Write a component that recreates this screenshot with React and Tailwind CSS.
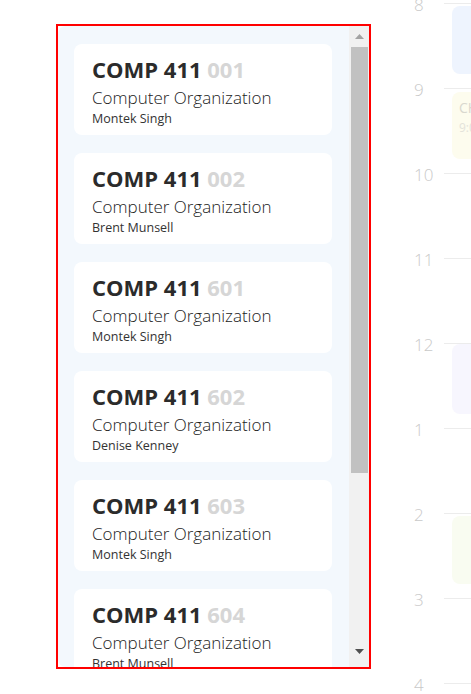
import React from "react";

const sections = [
  { num: "001", prof: "Montek Singh" },
  { num: "002", prof: "Brent Munsell" },
  { num: "601", prof: "Montek Singh" },
  { num: "602", prof: "Denise Kenney" },
  { num: "603", prof: "Montek Singh" },
  { num: "604", prof: "Brent Munsell" },
];

const hours = [
  { h: "8", ev: { cls: "mt-[2px] h-[68px] bg-[#eef4fe]" } },
  { h: "9", ev: { cls: "mt-[3px] h-[67px] bg-[#fdfcee]", title: "CHEM 101", time: "9:00 AM" } },
  { h: "10" },
  { h: "11" },
  { h: "12", ev: { cls: "mt-0 h-[70px] bg-[#f7f6fe]" } },
  { h: "1" },
  { h: "2", ev: { cls: "mt-[2px] h-[68px] bg-[#f9fcf1]" } },
  { h: "3" },
  { h: "4" },
];

function Card({ num, prof }) {
  return (
    <div className="w-[258px] h-[91px] shrink-0 rounded-lg bg-white pl-[18px] pr-3 pt-[10px] overflow-hidden">
      <div className="text-[22px] leading-[30px] font-bold text-[#2b2b2b] whitespace-nowrap">
        COMP 411 <span className="text-[#d6d6d6]">{num}</span>
      </div>
      <div className="text-[17px] leading-[28px] font-light text-[#222] whitespace-nowrap">
        Computer Organization
      </div>
      <div className="text-[12.5px] leading-[13px] text-[#333] whitespace-nowrap">{prof}</div>
    </div>
  );
}

export default function App() {
  return (
    <div
      className="relative w-[471px] h-[694px] overflow-hidden bg-white"
      style={{ fontFamily: '"Open Sans", "Noto Sans", sans-serif' }}
    >
      {/* background calendar */}
      <div className="flex flex-col pl-[414px] pt-[3px]">
        {hours.map(({ h, ev }) => (
          <div key={h} className="flex h-[85px] shrink-0">
            <div className="w-[30px] shrink-0 -mt-[10px] text-[17px] leading-[24px] font-light text-[#c9c9c9]">
              {h}
            </div>
            <div className="flex-1 min-w-0 border-t border-[#ececec] pl-[8px]">
              {ev && (
                <div className={`rounded-l-lg ${ev.cls} pl-[7px] pt-[6px] overflow-hidden whitespace-nowrap`}>
                  {ev.title && (
                    <>
                      <div className="text-[14px] leading-[20px] text-[#d9d8cf]">{ev.title}</div>
                      <div className="text-[12px] leading-[20px] text-[#e4e3da]">{ev.time}</div>
                    </>
                  )}
                </div>
              )}
            </div>
          </div>
        ))}
      </div>

      {/* course section panel */}
      <div className="absolute left-[56px] top-[24px] w-[315px] h-[645px] border-2 border-[#ff0000] bg-white flex">
        <div className="w-[291px] h-full rounded-l-lg bg-[#f3f8fd] overflow-hidden flex flex-col gap-[18px] pl-[16px] pt-[18px]">
          {sections.map((s) => (
            <Card key={s.num} {...s} />
          ))}
        </div>
        <div className="w-[20px] h-full bg-[#f1f1f1] flex flex-col">
          <div className="h-[21px] flex items-center justify-center pl-[1px]">
            <svg width="9" height="5" viewBox="0 0 9 5">
              <path d="M4.5 0 L9 5 L0 5 Z" fill="#a3a3a3" />
            </svg>
          </div>
          <div className="h-[426px] ml-[2px] mr-[1px] bg-[#c1c1c1]" />
          <div className="flex-1" />
          <div className="h-[19px] flex items-start justify-center pt-[1px] pl-[1px]">
            <svg width="9" height="5" viewBox="0 0 9 5">
              <path d="M0 0 L9 0 L4.5 5 Z" fill="#505050" />
            </svg>
          </div>
        </div>
      </div>
    </div>
  );
}
